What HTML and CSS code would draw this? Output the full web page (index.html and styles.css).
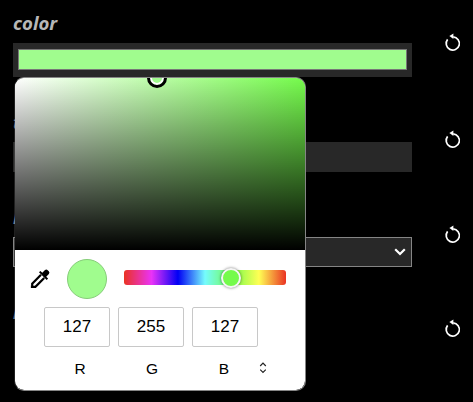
FILE: index.html
```html
<!DOCTYPE html>
<html lang="en">
<head>
<meta charset="utf-8">
<title>Settings</title>
<link rel="stylesheet" href="styles.css">
</head>
<body>
<svg width="0" height="0" class="defs">
  <symbol id="reset" viewBox="0 0 18 20">
    <path d="M3.6 7.4A6.6 6.6 0 1 0 9.2 4.9" fill="none" stroke="#fff" stroke-width="1.7"/>
    <path d="M5.4 4.1 9.4 1.4V6.9Z" fill="#fff"/>
  </symbol>
</svg>
<main class="settings">
  <section class="row first">
    <div class="field">
      <div class="label">color</div>
      <div class="color-input"><div class="swatch"></div></div>
    </div>
    <svg class="reset"><use href="#reset"/></svg>
  </section>
  <section class="row second">
    <div class="field">
      <div class="label link">t</div>
      <div class="text-input"></div>
    </div>
    <svg class="reset"><use href="#reset"/></svg>
  </section>
  <section class="row third">
    <div class="field">
      <div class="label link">l</div>
      <div class="select">
        <svg width="12" height="8" viewBox="0 0 12 8"><path d="M1.2 1.2 6 6 10.8 1.2" fill="none" stroke="#fff" stroke-width="2.2"/></svg>
      </div>
    </div>
    <svg class="reset"><use href="#reset"/></svg>
  </section>
  <section class="row fourth">
    <div class="field"><div class="label link">l</div></div>
    <svg class="reset"><use href="#reset"/></svg>
  </section>
</main>
<div class="picker">
  <div class="shade"><div class="shade-thumb"></div></div>
  <div class="tools">
    <svg class="dropper" width="20" height="20" viewBox="0 0 20 20">
      <path d="M11 5.8 2.2 14.6V17.8H5.4L14.2 9" fill="none" stroke="#000" stroke-width="2.2"/>
      <path d="M9 3.2 10.4 1.9 12.3 3.8 15 1.1Q16.4 0 17.7 1.2L18.8 2.3Q20 3.6 18.9 5L16.2 7.7 18.1 9.6 16.7 11Z" fill="#000"/>
      <path d="M.9 16.4V19.1H3.7Z" fill="#000"/>
    </svg>
    <div class="current"></div>
    <div class="hue"><div class="hue-thumb"></div></div>
  </div>
  <div class="channels">
    <div class="value">127</div>
    <div class="value">255</div>
    <div class="value">127</div>
  </div>
  <div class="names">
    <span>R</span><span>G</span><span>B</span>
    <svg width="8" height="12" viewBox="0 0 8 12"><path d="M1.2 4 4 1.2 6.8 4M1.2 7.6 4 10.4 6.8 7.6" fill="none" stroke="#222" stroke-width="1.2"/></svg>
  </div>
</div>
</body>
</html>
```
FILE: styles.css
```css
* { box-sizing: border-box; }
body {
  margin: 0;
  width: 473px;
  height: 402px;
  overflow: hidden;
  background: #000;
  position: relative;
}
.defs { position: absolute; }
.settings { padding: 10px 0 0 13px; }
.row { display: flex; gap: 32px; }
.first { height: 99px; }
.second { height: 95px; }
.third { height: 95px; }
.field { width: 399px; }
.label {
  height: 33px;
  font: italic bold 18.6px/26px "Noto Sans", sans-serif;
  color: #b7b7b7;
}
.link { color: #6a8298; }
.reset { width: 18px; height: 20px; margin-top: 22px; }
.second .reset,
.third .reset { margin-top: 20px; }
.fourth .reset { margin-top: 19px; }
.color-input { height: 34px; padding: 6px 5px; background: #282828; }
.swatch { height: 21px; background: #a0fc8e; border: 1px solid #777; }
.text-input { height: 30px; background: #282828; }
.select {
  height: 30px;
  background: #282828;
  border: 1px solid #858585;
  display: flex;
  align-items: center;
  justify-content: flex-end;
  padding-right: 5px;
}
.picker {
  position: absolute;
  left: 14px;
  top: 77px;
  width: 292px;
  height: 314px;
  border: 1px solid #858585;
  border-left-color: #80808040;
  border-radius: 10px;
  background: #fff;
  background-clip: padding-box;
  overflow: hidden;
  font-family: "Liberation Sans", sans-serif;
  color: #000;
}
.shade {
  position: relative;
  height: 172px;
  overflow: hidden;
  background: linear-gradient(to top, #000, transparent), linear-gradient(to right, #fff, #75fb4c);
}
.shade-thumb {
  position: absolute;
  left: 132px;
  top: -10px;
  width: 20px;
  height: 20px;
  border: 3px solid #000;
  border-radius: 50%;
  background: #a0fc8e;
  box-shadow: inset 0 0 0 2px #fff;
}
.tools { display: flex; align-items: center; height: 57px; padding-left: 15px; }
.current {
  width: 40px;
  height: 40px;
  margin: 1px 17px 0;
  border: 1px solid #86cc79;
  border-radius: 50%;
  background: #a0fc8e;
}
.hue {
  position: relative;
  width: 162px;
  height: 15px;
  margin-top: -2px;
  border-radius: 3px;
  background: linear-gradient(to right, #ea3323 0%, #ea33f7 17%, #0000f5 33.3%, #75fbfd 50%, #75fb4c 66.7%, #ffff54 83.3%, #ea3323 100%);
}
.hue-thumb {
  position: absolute;
  left: 97px;
  top: -2px;
  width: 20px;
  height: 20px;
  border: 2px solid #f5f5f5;
  border-radius: 50%;
  background: #75fb4c;
  box-shadow: 0 0 3px #0008;
}
.channels { display: flex; gap: 8px; padding-left: 29px; }
.value {
  width: 66px;
  height: 40px;
  border: 1px solid #c8c8c8;
  border-radius: 2px;
  font-size: 17px;
  line-height: 38px;
  text-align: center;
}
.names { display: flex; align-items: center; height: 42px; padding-left: 29px; font-size: 15.5px; }
.names span { width: 72px; padding-top: 2px; text-align: center; }
.names svg { margin-left: -1px; }
```
